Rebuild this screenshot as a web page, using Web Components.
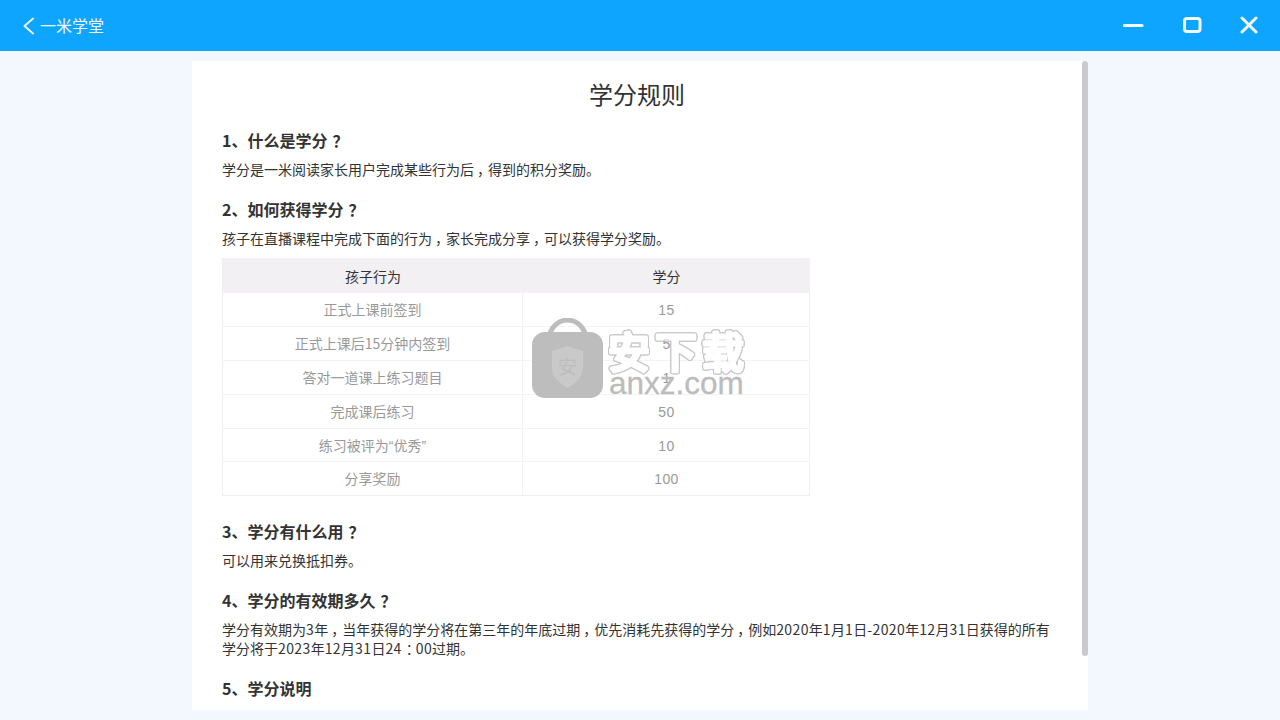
<!DOCTYPE html>
<html lang="zh"><head><meta charset="utf-8">
<style>
html,body{margin:0;height:720px;overflow:hidden;background:#f3f8ff;font-family:"Noto Sans CJK SC","Liberation Sans",sans-serif}
app-shell{display:block}
</style></head><body>
<app-shell>
<title-bar slot="bar" label="一米学堂"></title-bar>
<rule-card>
<h-title>学分规则</h-title>
<rule-sec head="1、什么是学分？"><p-line>学分是一米阅读家长用户完成某些行为后<p-c>，</p-c>得到的积分奖励。</p-line></rule-sec>
<rule-sec head="2、如何获得学分？"><p-line>孩子在直播课程中完成下面的行为<p-c>，</p-c>家长完成分享<p-c>，</p-c>可以获得学分奖励。</p-line>
<rule-table></rule-table></rule-sec>
<rule-sec head="3、学分有什么用？"><p-line>可以用来兑换抵扣券。</p-line></rule-sec>
<rule-sec head="4、学分的有效期多久？"><p-line>学分有效期为<n-m>3</n-m>年<p-c>，</p-c>当年获得的学分将在第三年的年底过期<p-c>，</p-c>优先消耗先获得的学分<p-c>，</p-c>例如<n-m>2020</n-m>年<n-m>1</n-m>月<n-m>1</n-m>日<n-m>-2020</n-m>年<n-m>12</n-m>月<n-m>31</n-m>日获得的所有<br>学分将于<n-m>2023</n-m>年<n-m>12</n-m>月<n-m>31</n-m>日<n-m>24</n-m><p-q>：</p-q><n-m>00</n-m>过期。</p-line></rule-sec>
<rule-sec head="5、学分说明"></rule-sec>
</rule-card>
</app-shell>
<script>
function def(name,html){customElements.define(name,class extends HTMLElement{connectedCallback(){if(this.shadowRoot)return;const s=this.attachShadow({mode:'open'});s.innerHTML=typeof html==='function'?html(this):html;}});}
def('p-c',`<style>:host{display:inline;padding-left:3px;margin-right:-3px}</style><slot></slot>`);
def('p-q',`<style>:host{display:inline;padding-left:4px;margin-right:-4px}</style><slot></slot>`);
def('n-m',`<style>:host{display:inline;letter-spacing:.4px}</style><slot></slot>`);
def('app-shell',`<style>:host{display:flex;flex-direction:column;height:720px}
.main{flex:1;min-height:0;display:flex;justify-content:center;padding:10px 0 10px}</style>
<slot name="bar"></slot><div class="main"><slot></slot></div>`);
def('title-bar',h=>`<style>:host{display:flex;align-items:center;height:51px;background:#0ea5ff;color:#eef8ff;flex:none}
.back{margin-left:22px;width:14px;height:20px;display:block}
.t{margin-left:4px;font-size:16px;line-height:51px;width:70px}
.sp{flex:1}
svg.i{display:block;flex:none}
.btns{display:flex;align-items:center;margin-right:22px;margin-top:-1px}
</style>
<svg class="back" viewBox="0 0 14 20"><path d="M11 2.500 L2.500 10 L11 17.500" fill="none" stroke="#e6f5ff" stroke-width="2" stroke-linecap="round" stroke-linejoin="round"/></svg>
<span class="t">${h.getAttribute('label')}</span><span class="sp"></span>
<div class="btns">
<svg class="i" width="21" height="20" viewBox="0 0 21 20" style="margin-right:38px"><path d="M1.500 10.500H19" stroke="#f2faff" stroke-width="3.200" stroke-linecap="round"/></svg>
<svg class="i" width="20" height="20" viewBox="0 0 20 20" style="margin-right:38px"><rect x="2.500" y="3.500" width="15.500" height="13" rx="2.500" fill="none" stroke="#f2faff" stroke-width="3"/></svg>
<svg class="i" width="18" height="18" viewBox="0 0 18 18"><path d="M2 2L16 16M16 2L2 16" stroke="#f2faff" stroke-width="3" stroke-linecap="round"/></svg>
</div>`);
def('rule-card',`<style>:host{display:block;position:relative;width:896px;height:649px;background:#fff;overflow:hidden;box-sizing:border-box}
.c{padding:0 36px 0 30px;display:flex;flex-direction:column}
.thumb{position:absolute;left:890px;top:0;width:6px;height:595px;background:#c9c9ce;border-radius:3px}
.wm{position:absolute;left:340px;top:257px;display:flex;width:230px;height:82px;pointer-events:none}
.w2{position:relative;margin-left:2px;width:145px}
.cn{position:absolute;left:0;top:0;opacity:.72;overflow:visible;filter:drop-shadow(1px 0 0 #b4b4b4) drop-shadow(-1px 0 0 #b4b4b4) drop-shadow(0 1px 0 #b4b4b4) drop-shadow(0 -1px 0 #b4b4b4)}
.cn text{font-family:"Noto Sans CJK SC",sans-serif;font-size:42px;font-weight:500;fill:#fff;stroke:#fff;stroke-width:3px;stroke-linejoin:round;paint-order:stroke;letter-spacing:5px}
.en{position:absolute;left:4px;top:45px;font:31.500px/40px "Liberation Sans",sans-serif;color:#bcbcbc;white-space:nowrap;-webkit-text-stroke:.3px #bcbcbc}
.sh{font-family:"Noto Sans CJK SC",sans-serif;font-size:19px;fill:#bdbdbd}
</style>
<div class="c"><slot></slot></div>
<div class="thumb"></div>
<div class="wm">
<svg width="71" height="81" viewBox="0 0 71 81"><path d="M17 18C20 7 28 2 35.500 2S51 7 54 18" fill="none" stroke="#bdbdbd" stroke-width="5"/><rect x="0" y="14" width="71" height="66" rx="13" fill="#bdbdbd"/>
<path d="M35.500 28L20 33V50C20 60 28 65 35.500 70C43 65 51 60 51 50V33Z" fill="#c9c9c9"/><text class="sh" x="26" y="56">安</text></svg>
<div class="w2"><svg class="cn" width="145" height="60" viewBox="0 0 145 60"><text x="3" y="50">安下载</text></svg><div class="en">anxz.com</div></div>
</div>`);
def('h-title',`<style>:host{display:block;text-align:center;font-size:24px;line-height:34px;color:#333;margin:16px 0 17px}</style><slot></slot>`);
def('rule-sec',h=>`<style>:host{display:block;color:#333}
.h{font-size:16px;font-weight:700;line-height:24px;margin-bottom:8px;color:#333}
.q{padding-left:5px}
.b{display:block;margin-bottom:18px}</style><div class="h">${h.getAttribute('head').replace('？','<span class="q">？</span>')}</div><div class="b"><slot></slot></div>`);
def('p-line',`<style>:host{display:block;font-size:14px;line-height:19px;color:#333;white-space:nowrap}</style><slot></slot>`);
const rows=[['正式上课前签到','15'],['正式上课后15分钟内签到','5'],['答对一道课上练习题目','1'],['完成课后练习','50'],['练习被评为<span class="qm">“</span>优秀<span class="qm">”</span>','10'],['分享奖励','100']];
def('rule-table',`<style>:host{display:grid;grid-template-columns:300px 287px;width:588px;box-sizing:border-box;margin-top:10px;margin-bottom:23px;font-size:14px;color:#999;border:solid #eeeeee;border-width:0 1px 1px 1px;position:relative}
.c{height:33.900px;line-height:32px;text-align:center;border-top:1px solid #f3f3f3;box-sizing:border-box}
.l{border-right:1px solid #f3f3f3}
.hd{background:#f2f0f3;color:#333;border-top:0;height:34px;line-height:36px}
.n{font-family:"Liberation Sans",sans-serif;font-size:14px;letter-spacing:.4px;line-height:34px}
.qm{font-family:"Liberation Sans",sans-serif}
</style>
<div class="c hd">孩子行为</div><div class="c hd">学分</div>
${rows.map(r=>`<div class="c l">${r[0]}</div><div class="c n">${r[1]}</div>`).join('')}`);
</script>
</body></html>
